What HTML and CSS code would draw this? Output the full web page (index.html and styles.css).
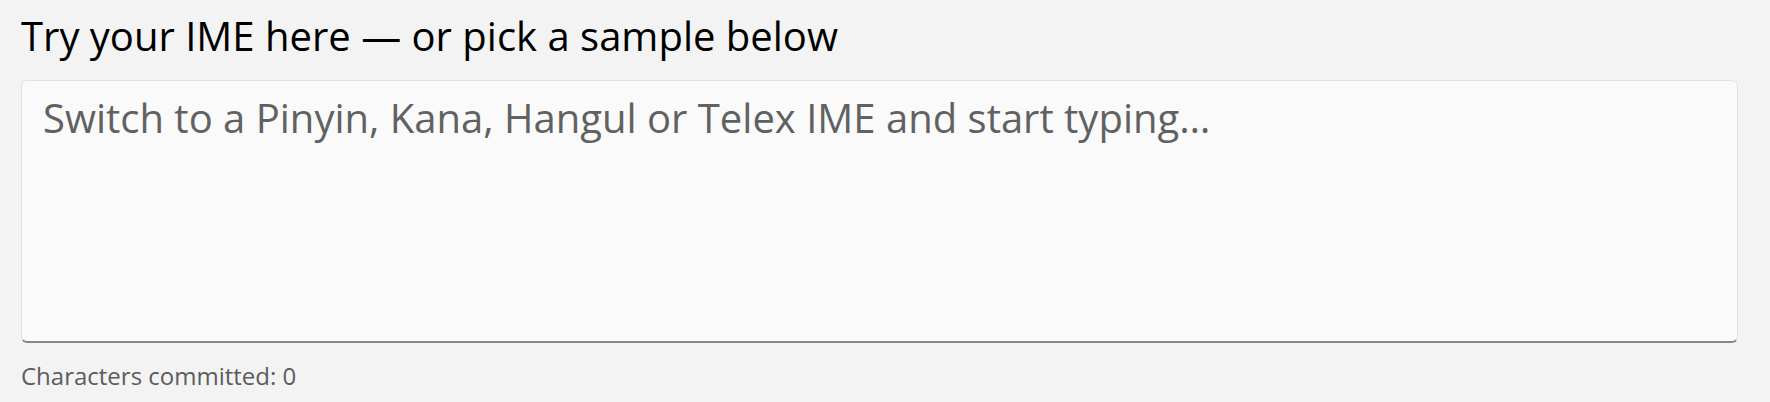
FILE: index.html
```html
<!DOCTYPE html>
<html lang="en">
<head>
<meta charset="utf-8">
<title>IME playground</title>
<link rel="stylesheet" href="styles.css">
</head>
<body>
<main class="page">
  <h2 class="title">Try your IME here — or pick a sample below</h2>
  <textarea class="ime-input" placeholder="Switch to a Pinyin, Kana, Hangul or Telex IME and start typing…"></textarea>
  <p class="counter">Characters committed: 0</p>
</main>
</body>
</html>
```

FILE: styles.css
```css
html, body {
  margin: 0;
  padding: 0;
  background: #f3f3f3;
}

.page {
  padding: 9px 32px 0 21px;
  font-family: "Open Sans", "Noto Sans", sans-serif;
  display: flex;
  flex-direction: column;
}

.title {
  margin: 0 0 17px 0;
  font-size: 40px;
  line-height: 54px;
  font-weight: 400;
  color: #000;
}

.ime-input {
  display: block;
  box-sizing: border-box;
  width: 100%;
  height: 263px;
  margin: 0;
  padding: 10px 21px;
  font-family: "Open Sans", "Noto Sans", sans-serif;
  font-size: 40px;
  line-height: 54px;
  color: #242424;
  background: #fafafa;
  border: 1px solid #e1e1e1;
  border-bottom: 2px solid #878787;
  border-radius: 6px;
  resize: none;
  outline: none;
}

.ime-input::placeholder {
  color: #616161;
  opacity: 1;
}

.counter {
  margin: 17px 0 0 0;
  font-size: 24px;
  line-height: 32px;
  color: #5c5c5c;
}
```
